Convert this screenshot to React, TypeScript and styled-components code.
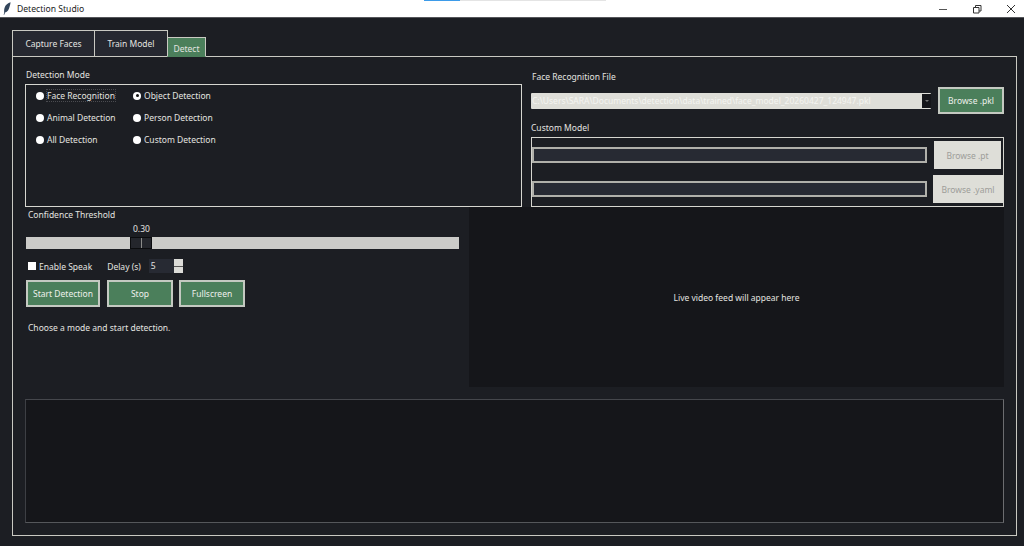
import React from "react";
import styled, { createGlobalStyle } from "styled-components";

const Global = createGlobalStyle`
  html, body { margin: 0; padding: 0; background: #1c1e23; overflow: hidden; }
  body { font-family: "Noto Sans", "Open Sans", sans-serif; font-size: 8.5px; color: #e4e4e0; }
  * { box-sizing: border-box; }
`;

const Win = styled.div`
  width: 1024px; height: 546px; display: flex; flex-direction: column; background: #1c1e23;
`;
const TitleBar = styled.div`
  position: relative; height: 18px; flex: none; background: #fff; color: #222; display: flex; align-items: center;
  padding-left: 3px; border-bottom: 1px solid #55565a; font-size: 8.6px;
`;
const TitleText = styled.span` margin-left: 6px; `;
const Progress = styled.div`
  position: absolute; left: 424px; top: 0; width: 182px; height: 1px; background: linear-gradient(90deg, #3d9be9 0 36px, #e4e4e4 36px);
`;
const WinButtons = styled.div`
  margin-left: auto; display: flex; gap: 24px; padding-right: 8px; align-items: center; height: 100%;
`;
const Body = styled.div` flex: 1; padding: 12px 7px 10px 12px; display: flex; flex-direction: column; `;
const TabRow = styled.div` display: flex; align-items: flex-end; height: 27px; position: relative; z-index: 1; margin-bottom: -1px; `;
const Tab = styled.div<{ $w: number; $active?: boolean }>`
  width: ${p => p.$w}px; height: ${p => (p.$active ? 20 : 27)}px; display: flex; align-items: center; justify-content: center;
  border: 1px solid #c9c9c2; border-bottom: ${p => (p.$active ? "1px solid #4b7f5b" : "1px solid #c9c9c2")};
  background: ${p => (p.$active ? "#4b7f5b" : "#262830")};
  padding-top: ${p => (p.$active ? "2px" : "0")};
  & + & { margin-left: -1px; }
`;
const Panel = styled.div`
  flex: 1; border: 1px solid #c9c9c2; padding: 12px; display: flex; flex-direction: column;
`;
const TopRow = styled.div` display: grid; grid-template-columns: 497px 473px; column-gap: 9px; height: 138px; flex: none; `;
const Col = styled.div` display: flex; flex-direction: column; min-width: 0; `;
const Label = styled.div<{ $ml?: number; $mt?: number; $h?: number }>`
  height: ${p => p.$h ?? 15}px; line-height: 12px; margin-left: ${p => p.$ml ?? 0}px; margin-top: ${p => p.$mt ?? 0}px;
  white-space: nowrap; flex: none;
`;
const ModeBox = styled.div`
  flex: 1; border: 1px solid #d6d6d0; padding: 4px 0 0 10px; display: grid;
  grid-template-columns: 97px 100px; grid-auto-rows: 22px; align-content: start;
`;
const RadioItem = styled.div` display: flex; align-items: center; gap: 3px; height: 13px; white-space: nowrap; `;
const Radio = styled.span<{ $on?: boolean }>`
  width: 8px; height: 8px; border-radius: 50%; background: #fff; display: inline-flex; align-items: center; justify-content: center; flex: none;
  &::after { content: ""; width: 3px; height: 3px; border-radius: 50%; background: ${p => (p.$on ? "#111" : "transparent")}; }
`;
const FocusText = styled.span` outline: 1px dotted #4a4b50; `;
const ComboRow = styled.div` display: flex; align-items: center; height: 27px; flex: none; `;
const Combo = styled.div`
  width: 400px; height: 16px; background: #deded8; color: #f4f4f0; line-height: 16px; padding-left: 1px;
  white-space: nowrap; overflow: hidden; display: flex; justify-content: space-between; border-radius: 1px;
`;
const ComboArrow = styled.span`
  width: 9px; height: 14px; margin: 1px 0; background: #15161a; flex: none; display: flex; align-items: center; justify-content: center;
  &::after { content: ""; border: 2px solid transparent; border-top: 2px solid #777; margin-top: 2px; }
`;
const Btn = styled.div<{ $w: number; $h?: number; $off?: boolean; $ml?: number }>`
  width: ${p => p.$w}px; height: ${p => p.$h ?? 27}px; flex: none; margin-left: ${p => p.$ml ?? 0}px;
  display: flex; align-items: center; justify-content: center; white-space: nowrap;
  background: ${p => (p.$off ? "#deded8" : "#4b7f5b")}; color: ${p => (p.$off ? "#9d9d98" : "#eef0ec")};
  border: ${p => (p.$off ? "none" : "2px solid #c4c9c1")};
`;
const ModelBox = styled.div`
  height: 70px; flex: none; border: 1px solid #d6d6d0; display: flex; flex-direction: column;
`;
const ModelRow = styled.div<{ $h: number }>` height: ${p => p.$h}px; display: flex; align-items: center; flex: none; `;
const Entry = styled.div` width: 395px; height: 16px; background: #272a33; border: 2px solid #b0b0aa; flex: none; `;
const BottomRow = styled.div` display: grid; grid-template-columns: 444px 535px; height: 180px; flex: none; `;
const Controls = styled.div` display: flex; flex-direction: column; padding-left: 1px; `;
const ValueLabel = styled.div` width: 433px; height: 12px; line-height: 12px; margin-top: 1px; padding-left: 107px; `;
const Trough = styled.div` width: 433px; height: 12px; background: #cbcbc8; position: relative; flex: none; margin-top: 2px; `;
const Thumb = styled.div`
  position: absolute; left: 104px; top: 0; width: 22px; height: 12px; background: #24262c; border: 1px solid #0b0c0e;
  &::after { content: ""; position: absolute; left: 10px; top: 0; bottom: 0; width: 1px; background: #8c8c8a; }
`;
const OptionRow = styled.div` display: flex; align-items: center; height: 14px; margin-top: 10px; padding-left: 2px; flex: none; `;
const Check = styled.span` width: 8px; height: 8px; background: #fff; flex: none; margin-right: 3px; `;
const DelayLabel = styled.span` margin-left: 15px; `;
const Spin = styled.div`
  width: 34px; height: 14px; margin-left: 8px; background: #272a33; display: flex; justify-content: space-between; padding-left: 2px; line-height: 14px;
`;
const SpinBtns = styled.div`
  width: 9px; display: flex; flex-direction: column; gap: 1px; background: #555;
  & > span { flex: 1; background: #dcdcd8; }
`;
const ButtonRow = styled.div` display: flex; margin-top: 7px; flex: none; `;
const Status = styled.div` margin: 15px 0 0 2px; height: 12px; line-height: 12px; `;
const Video = styled.div` background: #15161a; display: flex; align-items: center; justify-content: center; `;
const Log = styled.div`
  margin-top: 12px; width: 979px; height: 124px; flex: none; background: #15161a; border: 1px solid;
  border-color: #45474c #6c6d70 #55575b #3d3f44;
`;

const Feather = () => (
  <svg width="8" height="13" viewBox="0 0 8 13" aria-hidden="true">
    <path d="M7.600.3C5 .8 2.400 3 1.500 6 1 7.800 1.100 9.800 1.200 10.800L.6 12.700h.7l.8-2.100C4.600 9.900 6 7.400 6.500 5 7 3.200 7.500 1.700 7.600.3z" fill="#33465c" />
  </svg>
);
const Min = () => (<svg width="10" height="10" viewBox="0 0 10 10"><path d="M1 5.500h8" stroke="#555" strokeWidth="1" /></svg>);
const Max = () => (<svg width="10" height="10" viewBox="0 0 10 10"><path d="M1.500 3.500h5.500v5.500H1.500zM3.500 3.500V1.500H9v5.500H7" stroke="#333" strokeWidth="1" fill="none" /></svg>);
const Close = () => (<svg width="10" height="10" viewBox="0 0 10 10"><path d="M1 1l8 8M9 1l-8 8" stroke="#333" strokeWidth="1" /></svg>);

export default function App() {
  return (
    <Win>
      <Global />
      <TitleBar>
        <Feather />
        <TitleText>Detection Studio</TitleText>
        <Progress />
        <WinButtons><Min /><Max /><Close /></WinButtons>
      </TitleBar>
      <Body>
        <TabRow>
          <Tab $w={83}>Capture Faces</Tab>
          <Tab $w={74}>Train Model</Tab>
          <Tab $w={39} $active>Detect</Tab>
        </TabRow>
        <Panel>
          <TopRow>
            <Col>
              <Label $ml={1}>Detection Mode</Label>
              <ModeBox>
                <RadioItem><Radio /><FocusText>Face Recognition</FocusText></RadioItem>
                <RadioItem><Radio $on /><span>Object Detection</span></RadioItem>
                <RadioItem><Radio /><span>Animal Detection</span></RadioItem>
                <RadioItem><Radio /><span>Person Detection</span></RadioItem>
                <RadioItem><Radio /><span>All Detection</span></RadioItem>
                <RadioItem><Radio /><span>Custom Detection</span></RadioItem>
              </ModeBox>
            </Col>
            <Col>
              <Label $ml={1} $mt={2} $h={16}>Face Recognition File</Label>
              <ComboRow>
                <Combo>C:\Users\SARA\Documents\detection\data\trained\face_model_20260427_124947.pkl<ComboArrow /></Combo>
                <Btn $w={66} $ml={7}>Browse .pkl</Btn>
              </ComboRow>
              <Label $mt={8} $h={15}>Custom Model</Label>
              <ModelBox>
                <ModelRow $h={34}><Entry /><Btn $off $w={67} $h={28} $ml={7}>Browse .pt</Btn></ModelRow>
                <ModelRow $h={34}><Entry /><Btn $off $w={70} $h={28} $ml={6}>Browse .yaml</Btn></ModelRow>
              </ModelBox>
            </Col>
          </TopRow>
          <BottomRow>
            <Controls>
              <Label $ml={2} $mt={2} $h={13}>Confidence Threshold</Label>
              <ValueLabel>0.30</ValueLabel>
              <Trough><Thumb /></Trough>
              <OptionRow>
                <Check />Enable Speak
                <DelayLabel>Delay (s)</DelayLabel>
                <Spin>5<SpinBtns><span /><span /></SpinBtns></Spin>
              </OptionRow>
              <ButtonRow>
                <Btn $w={74}>Start Detection</Btn>
                <Btn $w={66} $ml={7}>Stop</Btn>
                <Btn $w={66} $ml={6}>Fullscreen</Btn>
              </ButtonRow>
              <Status>Choose a mode and start detection.</Status>
            </Controls>
            <Video>Live video feed will appear here</Video>
          </BottomRow>
          <Log />
        </Panel>
      </Body>
    </Win>
  );
}
